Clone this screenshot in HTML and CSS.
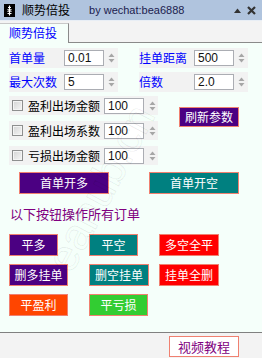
FILE: index.html
```html
<!DOCTYPE html>
<html lang="zh">

<head>
    <meta charset="UTF-8">
    <title>顺势倍投</title>
    <link rel="stylesheet" href="styles.css">
</head>

<body>
    <div class="window">
        <!-- title bar -->
        <div class="titlebar">
            <svg class="app-icon" width="11" height="13" viewBox="0 0 11 13">
                <rect width="11" height="13" fill="#000" />
                <path d="M5.5 1.5v10M4 3.5h3M3.5 5.5l4 2M7.5 5.5l-4 2M3.5 9.5h4" stroke="#fff" stroke-width="1.2" fill="none" />
            </svg>
            <span class="app-title">顺势倍投</span>
            <span class="app-by">by wechat:bea6888</span>
            <span class="win-ctrl">
                <svg width="7" height="5" viewBox="0 0 7 5"><polygon points="0,5 3.5,0.5 7,5" fill="#333" /></svg>
                <svg class="close-x" width="9" height="9" viewBox="0 0 9 9"><path d="M1 1l7 7M8 1l-7 7" stroke="#333" stroke-width="2.2" /></svg>
            </span>
        </div>

        <!-- tab strip -->
        <div class="tabs">
            <div class="tab">顺势倍投</div>
        </div>

        <!-- main panel -->
        <div class="panel">
            <div class="watermark">eahub.cn</div>

            <div class="param-row">
                <div class="param">
                    <span class="param-label">首单量</span>
                    <span class="num">0.01</span>
                    <svg class="spin" width="9" height="16" viewBox="0 0 9 16"><polygon points="1.5,7 4.5,3.5 7.5,7" /><polygon points="1.5,9 4.5,12.5 7.5,9" /></svg>
                </div>
                <div class="param">
                    <span class="param-label">挂单距离</span>
                    <span class="num">500</span>
                    <svg class="spin" width="9" height="16" viewBox="0 0 9 16"><polygon points="1.5,7 4.5,3.5 7.5,7" /><polygon points="1.5,9 4.5,12.5 7.5,9" /></svg>
                </div>
            </div>
            <div class="param-row">
                <div class="param">
                    <span class="param-label">最大次数</span>
                    <span class="num">5</span>
                    <svg class="spin" width="9" height="16" viewBox="0 0 9 16"><polygon points="1.5,7 4.5,3.5 7.5,7" /><polygon points="1.5,9 4.5,12.5 7.5,9" /></svg>
                </div>
                <div class="param">
                    <span class="param-label">倍数</span>
                    <span class="num">2.0</span>
                    <svg class="spin" width="9" height="16" viewBox="0 0 9 16"><polygon points="1.5,7 4.5,3.5 7.5,7" /><polygon points="1.5,9 4.5,12.5 7.5,9" /></svg>
                </div>
            </div>

            <div class="mid">
                <div class="checks">
                    <div class="check-row">
                        <span class="box"></span>
                        <span class="check-label">盈利出场金额</span>
                        <span class="num">100</span>
                        <svg class="spin" width="9" height="16" viewBox="0 0 9 16"><polygon points="1.5,7 4.5,3.5 7.5,7" /><polygon points="1.5,9 4.5,12.5 7.5,9" /></svg>
                    </div>
                    <div class="check-row">
                        <span class="box"></span>
                        <span class="check-label">盈利出场系数</span>
                        <span class="num">100</span>
                        <svg class="spin" width="9" height="16" viewBox="0 0 9 16"><polygon points="1.5,7 4.5,3.5 7.5,7" /><polygon points="1.5,9 4.5,12.5 7.5,9" /></svg>
                    </div>
                    <div class="check-row">
                        <span class="box"></span>
                        <span class="check-label">亏损出场金额</span>
                        <span class="num">100</span>
                        <svg class="spin" width="9" height="16" viewBox="0 0 9 16"><polygon points="1.5,7 4.5,3.5 7.5,7" /><polygon points="1.5,9 4.5,12.5 7.5,9" /></svg>
                    </div>
                </div>
                <div class="btn indigo refresh">刷新参数</div>
            </div>

            <div class="open-row">
                <div class="btn indigo wide">首单开多</div>
                <div class="btn teal wide">首单开空</div>
            </div>

            <div class="note">以下按钮操作所有订单</div>

            <div class="btn-grid">
                <div class="btn indigo w49">平多</div>
                <div class="btn teal w49">平空</div>
                <div class="btn red w60">多空全平</div>
                <div class="btn indigo w59">删多挂单</div>
                <div class="btn teal w60">删空挂单</div>
                <div class="btn red w60">挂单全删</div>
                <div class="btn orange w59">平盈利</div>
                <div class="btn green w59">平亏损</div>
            </div>
        </div>

        <!-- footer -->
        <div class="footer">
            <div class="video-btn">视频教程</div>
        </div>
    </div>
</body>

</html>
```

FILE: styles.css
```css
* {
    box-sizing: border-box;
}

body {
    margin: 0;
    font-family: "Noto Sans CJK SC", "Liberation Sans", sans-serif;
    font-size: 12px;
    background: #f3f3f3;
}

.window {
    width: 262px;
    height: 358px;
    overflow: hidden;
}

.titlebar {
    height: 21px;
    background: #b0c4de;
    display: flex;
    align-items: center;
    border-bottom: 1px solid #e8eef5;
}

.app-icon {
    margin-left: 4px;
    display: block;
}

.app-title {
    margin-left: 7px;
    font-size: 12px;
    line-height: 14px;
    color: #000;
}

.app-by {
    margin-left: 19px;
    font-family: "Liberation Sans", sans-serif;
    font-size: 11px;
    line-height: 13px;
    color: #1c1c4e;
}

.win-ctrl {
    margin-left: auto;
    margin-right: 6px;
    display: flex;
    align-items: center;
    gap: 6px;
}

.win-ctrl svg {
    display: block;
}

.tabs {
    height: 22px;
    background: #f3f3f3;
    display: flex;
    align-items: flex-end;
    border-bottom: 1px solid #8a8a8a;
}

.tab {
    width: 69px;
    height: 20px;
    margin-bottom: -1px;
    background: #f5fffa;
    border-top: 1px solid #c8c8c8;
    border-right: 1px solid #8a8a8a;
    color: #0000ff;
    font-size: 12px;
    line-height: 18px;
    padding-left: 9px;
}

.panel {
    position: relative;
    height: 289px;
    background: #f5fffa;
    padding-top: 5px;
    overflow: hidden;
}

.watermark {
    position: absolute;
    left: 10px;
    top: 120px;
    transform: rotate(-62deg);
    font-family: "Liberation Sans", sans-serif;
    font-size: 44px;
    color: transparent;
    -webkit-text-stroke: 1px rgba(0, 0, 0, 0.07);
    pointer-events: none;
}

.param-row {
    display: flex;
    gap: 21px;
    padding-left: 9px;
    margin-bottom: 4px;
}

.param {
    display: flex;
    align-items: center;
    height: 20px;
    width: 109px;
    background: #f2f2f2;
}

.param-label {
    width: 55px;
    color: #0000ff;
    font-size: 12px;
    line-height: 14px;
}

.num {
    width: 40px;
    height: 16px;
    background: #fff;
    border: 1px solid #abadb3;
    font-family: "Liberation Sans", sans-serif;
    font-size: 12px;
    line-height: 14px;
    padding-left: 3px;
    color: #111;
}

.spin {
    display: block;
    margin-left: 3px;
    fill: #a6a6a6;
}

.mid {
    display: flex;
    margin-top: 2px;
}

.checks {
    display: flex;
    flex-direction: column;
    gap: 6px;
    padding-left: 9px;
}

.check-row {
    display: flex;
    align-items: center;
    height: 19px;
    width: 149px;
    background: #f2f2f2;
    padding-left: 3px;
}

.box {
    width: 11px;
    height: 11px;
    border: 1px solid #8e8f8f;
    background: linear-gradient(135deg, #d4d4d4, #f6f6f6);
    box-shadow: inset 0 0 0 1px #f4f4f4;
}

.check-label {
    width: 76px;
    margin-left: 5px;
    font-size: 12px;
    line-height: 14px;
    color: #000;
}

.check-row .spin {
    margin-left: 4px;
}

.btn {
    height: 22px;
    border: 1px solid #f08070;
    color: #fff;
    font-size: 12px;
    line-height: 20px;
    text-align: center;
}

.indigo {
    background: #4b0082;
}

.teal {
    background: #008080;
}

.red {
    background: #ff0000;
}

.orange {
    background: #ff4500;
}

.green {
    background: #32cd32;
}

.refresh {
    width: 60px;
    height: 20px;
    line-height: 18px;
    margin-left: 21px;
    margin-top: 11px;
}

.open-row {
    display: flex;
    gap: 40px;
    padding-left: 19px;
    margin-top: 7px;
}

.wide {
    width: 90px;
}

.note {
    margin-top: 11px;
    padding-left: 10px;
    color: #800080;
    font-size: 13px;
    line-height: 18px;
}

.btn-grid {
    display: grid;
    grid-template-columns: 80px 70px auto;
    row-gap: 8px;
    justify-items: start;
    padding-left: 9px;
    margin-top: 11px;
}

.w49 {
    width: 49px;
}

.w59 {
    width: 59px;
}

.w60 {
    width: 60px;
}

.footer {
    height: 26px;
    background: #f3f3f3;
    border-top: 1px solid #808080;
    display: flex;
    justify-content: flex-end;
    padding-right: 23px;
    padding-top: 3px;
}

.video-btn {
    width: 70px;
    height: 21px;
    background: #fff;
    border: 1px solid #f08070;
    color: #800080;
    font-size: 13px;
    line-height: 19px;
    text-align: center;
}
```
